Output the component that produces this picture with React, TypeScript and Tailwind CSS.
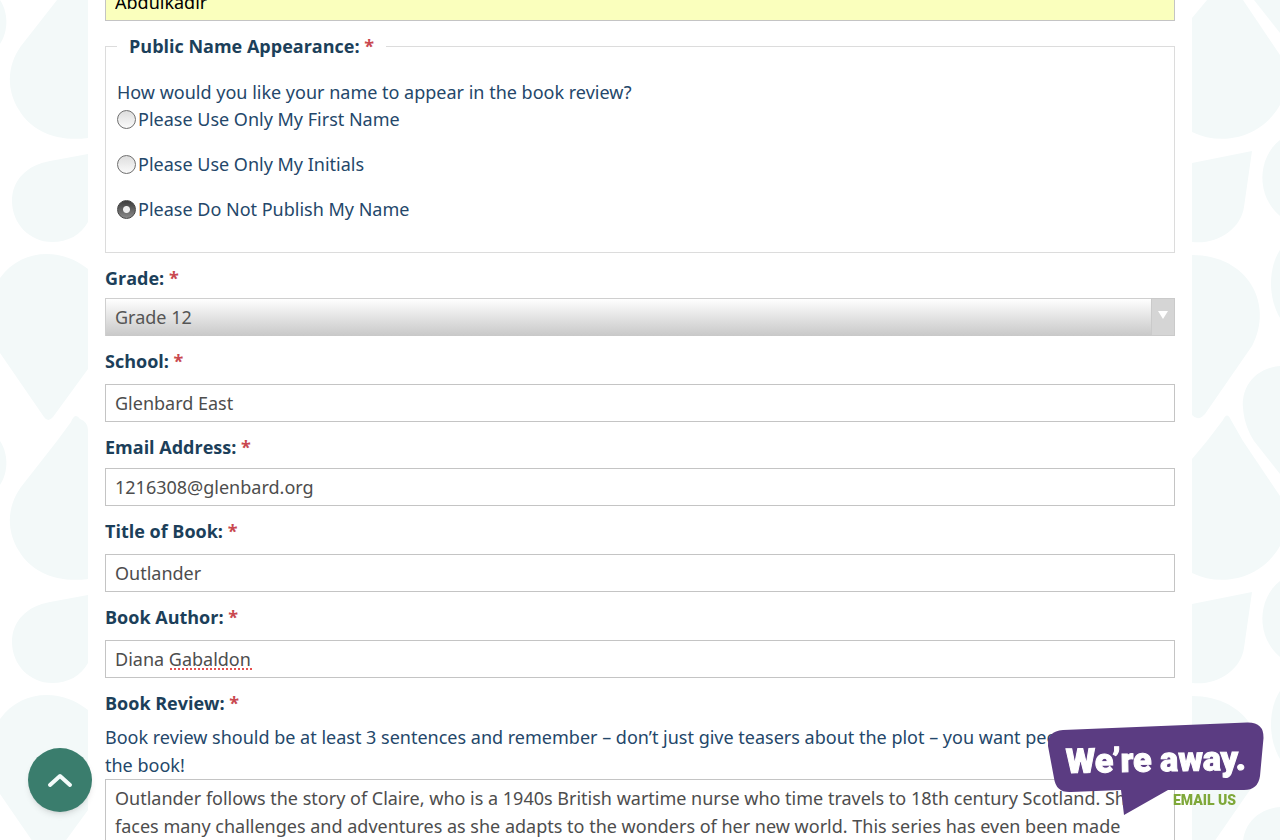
import { useState } from "react";
import type { ReactNode } from "react";

const nameOptions = [
  "Please Use Only My First Name",
  "Please Use Only My Initials",
  "Please Do Not Publish My Name",
];

const grades = ["Grade 9", "Grade 10", "Grade 11", "Grade 12"];

const inputClass =
  "block h-[38px] w-full rounded-none border border-[#c4c4c4] bg-white px-[9px] text-[18px] text-[#4d4d4d] outline-none";

function Required() {
  return <span className="text-[#c9484f]"> *</span>;
}

function Label({ htmlFor, children }: { htmlFor: string; children: ReactNode }) {
  return (
    <label htmlFor={htmlFor} className="block font-['Open_Sans',sans-serif] font-bold leading-[27px] text-[#1c3f5a]">
      {children}
      <Required />
    </label>
  );
}

function TextField({ id, label, value, tight }: { id: string; label: string; value: string; tight?: boolean }) {
  return (
    <div className={tight ? "flex flex-col gap-[7px]" : "flex flex-col gap-[9px]"}>
      <Label htmlFor={id}>{label}</Label>
      <input id={id} type="text" defaultValue={value} spellCheck={false} className={inputClass} />
    </div>
  );
}

function LeftDrops() {
  return (
    <svg className="h-full w-[88px] shrink-0" aria-hidden="true">
      <defs>
        <pattern id="drops-left" width="88" height="441" patternUnits="userSpaceOnUse">
          <g fill="#f3f9f9">
            <path d="M57 0 L21 46 C6 67 7 91 19 110 C32 132 58 142 88 138 V0 Z" />
            <path d="M88 154 L50 161 C27 165 12 180 12 201 C12 224 30 242 52 242 C68 242 81 235 88 222 Z" />
            <path d="M0 278 C22 247 63 248 88 269 V369 L53 417 Q48 423 44 417 L0 353 Z" />
            <path d="M0 0 C8 12 9 30 0 44 Z" />
            <path d="M57 441 L71 422 Q75 412 80 419 Q88 422 88 430 V441 Z" />
          </g>
        </pattern>
      </defs>
      <rect width="100%" height="100%" fill="url(#drops-left)" />
    </svg>
  );
}

function RightDrops() {
  return (
    <svg className="h-full w-[88px] shrink-0" aria-hidden="true">
      <defs>
        <pattern id="drops-right" width="88" height="441" patternUnits="userSpaceOnUse">
          <g fill="#f3f9f9">
            <path d="M15 0 L0 18 V132 C31 147 70 137 88 105 V55 L51 0 Z" />
            <path d="M62 0 L88 33 V0 Z" />
            <path d="M0 163 L60 151 L52 207 C49 229 25 245 0 242 Z" />
            <path d="M88 140 C65 158 64 196 88 216 Z" />
            <path d="M0 255 C56 255 82 304 60 346 L13 414 Q6 422 0 415 Z" />
            <path d="M88 250 C76 268 76 298 88 318 Z" />
            <path d="M88 366 C64 368 49 386 51 408 C52 422 57 433 62 441 H88 Z" />
            <path d="M15 441 L31 420 Q35 411 39 420 L51 441 Z" />
          </g>
        </pattern>
      </defs>
      <rect width="100%" height="100%" fill="url(#drops-right)" />
    </svg>
  );
}

function ChatBadge() {
  return (
    <button type="button" aria-label="We’re away. Email us" className="fixed right-4 bottom-6 h-[94px] w-[217px] cursor-pointer">
      <svg viewBox="0 0 217 94" className="h-full w-full overflow-visible">
        <path
          d="M16 8 L200 0.500 Q217 0 216.500 16 L213 54 Q211 68 197 68 H121 L77 93 L74 68 L24 70 Q9 71 7 56 L1 24 Q0 9 16 8 Z"
          fill="#5b3c82"
        />
        <text
          x="19"
          y="51"
          transform="rotate(-1 19 51)"
          fill="#fff"
          stroke="#fff"
          strokeWidth="1"
          className="font-['Roboto'] text-[34px] font-black"
        >
          We’re away.
        </text>
        <text x="126" y="83" fill="#7fa83a" className="font-['Roboto'] text-[14px] font-black">
          EMAIL US
        </text>
      </svg>
    </button>
  );
}

export default function App() {
  const [nameChoice, setNameChoice] = useState(nameOptions[2]);

  return (
    <div className="flex h-screen overflow-hidden bg-white font-['Noto_Sans',sans-serif] text-[18px] text-[#24476a]">
      <LeftDrops />

      <main className="min-w-0 flex-1 px-[17px]">
        <form className="-mt-[17px] flex flex-col gap-3" onSubmit={(e) => e.preventDefault()}>
          <input
            type="text"
            aria-label="Last Name"
            defaultValue="Abdulkadir"
            spellCheck={false}
            className="block h-[38px] w-full rounded-none border border-[#c4c4c4] bg-[#faffbd] px-[9px] text-[18px] text-black outline-none"
          />

          <fieldset className="border border-[#dcdcdc] px-[11px] pb-[29px]">
            <legend className="px-3 font-['Open_Sans',sans-serif] font-bold leading-[27px] text-[#1c3f5a]">
              Public Name Appearance:
              <Required />
            </legend>
            <p className="mt-[18px] leading-[28px]">How would you like your name to appear in the book review?</p>
            <div className="flex flex-col gap-[18px]">
              {nameOptions.map((option) => (
                <label key={option} className="flex items-center gap-[2px] leading-[27px]">
                  <input
                    type="radio"
                    name="appearance"
                    checked={nameChoice === option}
                    onChange={() => setNameChoice(option)}
                    className="size-[19px] appearance-none rounded-full border border-[#6f6f6f] bg-linear-to-b from-[#dedede] to-[#fafafa] checked:border-[#444] checked:bg-[radial-gradient(circle,#eee_0_3px,transparent_4px),linear-gradient(#3c3c3c,#8a8a8a)]"
                  />
                  {option}
                </label>
              ))}
            </div>
          </fieldset>

          <div className="flex flex-col gap-[6px]">
            <Label htmlFor="grade">Grade:</Label>
            <div className="relative">
              <select
                id="grade"
                defaultValue="Grade 12"
                className="block h-[38px] w-full appearance-none rounded-none border border-b-0 border-[#cfcfcf] bg-linear-to-b from-white to-[#c8c8c8] px-[9px] text-[18px] text-[#555] outline-none"
              >
                {grades.map((grade) => (
                  <option key={grade}>{grade}</option>
                ))}
              </select>
              <span className="pointer-events-none absolute inset-y-0 right-0 flex w-6 justify-center border border-[#cacaca] bg-[#d5d5d5] pt-3">
                <svg viewBox="0 0 10 8" className="h-2 w-[10px]" aria-hidden="true">
                  <path d="M0 0 H10 L5 8 Z" fill="#fff" />
                </svg>
              </span>
            </div>
          </div>

          <TextField id="school" label="School:" value="Glenbard East" />
          <TextField id="email" label="Email Address:" value="1216308@glenbard.org" tight />
          <TextField id="title" label="Title of Book:" value="Outlander" />

          <div className="relative">
            <TextField id="author" label="Book Author:" value="Diana Gabaldon" />
            {/* spelling mark under the surname */}
            <span className="pointer-events-none absolute bottom-2 left-[65px] w-[82px] border-b-2 border-dotted border-[#e5504f]" />
          </div>

          <div>
            <Label htmlFor="review">Book Review:</Label>
            <p className="mt-[6px] leading-[28px]">
              Book review should be at least 3 sentences and remember – don’t just give teasers about the plot – you want
              people to read the book!
            </p>
            <textarea
              id="review"
              rows={4}
              spellCheck={false}
              className="block w-full resize-none rounded-none border border-[#c4c4c4] bg-white px-[9px] py-1 leading-[28px] text-[#4d4d4d] outline-none"
              defaultValue="Outlander follows the story of Claire, who is a 1940s British wartime nurse who time travels to 18th century Scotland. She faces many challenges and adventures as she adapts to the wonders of her new world. This series has even been made"
            />
          </div>
        </form>
      </main>

      <RightDrops />

      <button
        type="button"
        aria-label="Back to top"
        className="fixed bottom-7 left-7 flex size-16 cursor-pointer items-center justify-center rounded-full bg-[#3a7d6d] shadow-md"
      >
        <svg viewBox="0 0 26 16" className="h-4 w-[26px]" aria-hidden="true">
          <path
            d="M3 13 L13 4 L23 13"
            fill="none"
            stroke="#f3fbfa"
            strokeWidth="4"
            strokeLinecap="round"
            strokeLinejoin="round"
          />
        </svg>
      </button>

      <ChatBadge />
    </div>
  );
}
